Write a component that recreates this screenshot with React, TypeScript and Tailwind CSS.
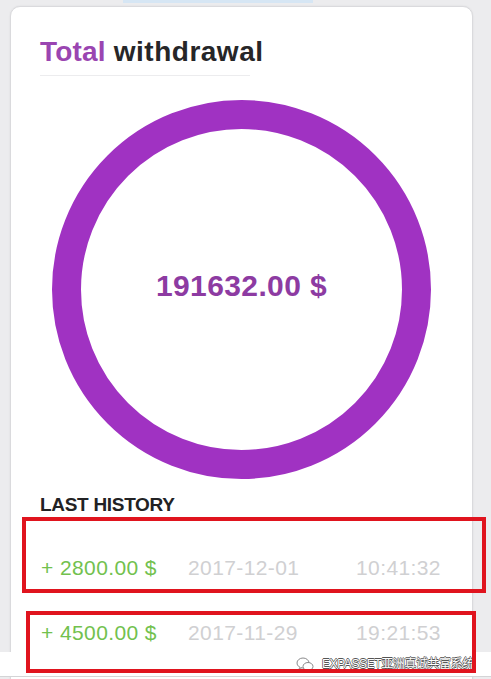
import React from "react";

const font = { fontFamily: '"Liberation Sans", Arial, sans-serif' };

function Row({
  amount,
  date,
  time,
  cls,
}: {
  amount: string;
  date: string;
  time: string;
  cls: string;
}) {
  return (
    <div className={cls}>
      <div className="flex items-center text-[21px] leading-none tracking-[0.4px]">
        <span className="w-[147px] text-[#72c14e]">{amount}</span>
        <span className="w-[168px] text-[#d0d0d2]">{date}</span>
        <span className="text-[#d0d0d2]">{time}</span>
      </div>
    </div>
  );
}

export default function App() {
  return (
    <div
      className="relative w-[491px] h-[679px] overflow-hidden bg-[#ececee]"
      style={font}
    >
      <div className="ml-[123px] w-[190px] h-[3px] bg-[#d6e6f4]" />
      <div className="ml-[10px] mt-[3px] w-[463px] h-[720px] rounded-[10px] border border-[#dadadd] bg-white shadow-[0_0_2px_rgba(0,0,0,0.08)] px-[29px] pt-[31px]">
        <h1 className="text-[28px] leading-none font-bold tracking-[0.2px]">
          <span className="text-[#9a45b1]">Total</span>{" "}
          <span className="text-[#262628] tracking-[0.5px]">withdrawal</span>
        </h1>
        <div className="mt-[9px] w-[210px] h-px bg-[#ececee]" />
        <div className="mt-[24px] mx-auto w-[379px] h-[379px] rounded-full border-[29px] border-[#a032c2] flex items-center justify-center">
          <span className="text-[30px] leading-none font-bold text-[#8d3ba2] tracking-[0.4px] -mt-[8px]">
            191632.00 $
          </span>
        </div>
        <div className="mt-[16px] text-[19px] leading-none font-bold text-[#222224] tracking-[-0.3px]">
          LAST HISTORY
        </div>
        <Row
          amount="+ 2800.00 $"
          date="2017-12-01"
          time="10:41:32"
          cls="mt-[3px] -ml-[18px] -mr-[43px] h-[76px] border-[4px] border-[#e0141e] pl-[15px] pt-[36px]"
        />
        <Row
          amount="+ 4500.00 $"
          date="2017-11-29"
          time="19:21:53"
          cls="relative z-20 mt-[18px] -ml-[14px] -mr-[33px] h-[62px] border-[4px] border-[#e0141e] pl-[11px] pt-[7px]"
        />
      </div>
      <div className="absolute left-0 top-[652px] z-10 w-full h-[25px] bg-white border-b border-[#d4d4d6] flex items-center justify-end pr-[17px] gap-[8px]">
        <svg width="18" height="15" viewBox="0 0 18 15" fill="none">
          <ellipse cx="7" cy="6" rx="6" ry="5" stroke="#8a8a8c" strokeWidth="1" fill="white" />
          <ellipse cx="12" cy="9.5" rx="5" ry="4" stroke="#8a8a8c" strokeWidth="1" fill="white" />
          <path d="M3.5 10.5 L3 13 L5.5 11" stroke="#8a8a8c" strokeWidth="1" fill="white" />
        </svg>
        <span
          className="text-[12px] leading-none text-white tracking-[-0.4px] [text-shadow:0.6px_0_0_#555,-0.6px_0_0_#555,0_0.6px_0_#555,0_-0.6px_0_#555]"
          style={{ fontFamily: '"Liberation Sans", "Noto Sans CJK SC", sans-serif' }}
        >
          EXPASSET亚洲真诚共富系统
        </span>
      </div>
    </div>
  );
}
